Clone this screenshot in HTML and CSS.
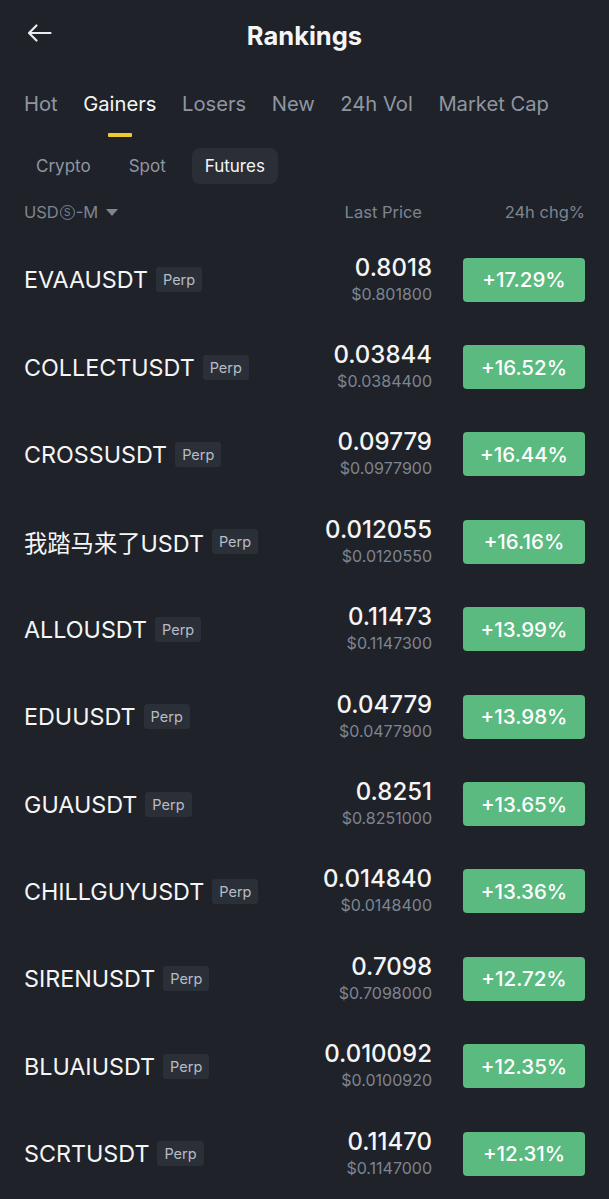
FILE: index.html
```html
<!DOCTYPE html>
<html lang="en">
<head>
    <meta charset="UTF-8">
    <meta name="viewport" content="width=device-width, initial-scale=1.0">
    <title>Rankings</title>
    <link rel="stylesheet" href="styles.css">
</head>
<body>
    <div id="pantalla">
        <div id="cabecera">
            <span class="atras">
                <svg width="26" height="20" viewBox="0 0 26 20"><path d="M24.5 10H3M10.5 2.5L3 10l7.5 7.5" fill="none" stroke="#eaecef" stroke-width="2.2" stroke-linecap="round" stroke-linejoin="round"/></svg>
            </span>
            <div class="titulo">Rankings</div>
        </div>

        <div id="pestanas">
            <div class="pestana">Hot</div>
            <div class="pestana activa">Gainers</div>
            <div class="pestana">Losers</div>
            <div class="pestana">New</div>
            <div class="pestana">24h Vol</div>
            <div class="pestana">Market Cap</div>
        </div>

        <div id="subpestanas">
            <div class="sub">Crypto</div>
            <div class="sub">Spot</div>
            <div class="sub sub-activa">Futures</div>
        </div>

        <div id="encabezado">
            <div class="col-nombre">USD<span class="circulo">S</span>-M <span class="flecha"></span></div>
            <div class="col-precio">Last Price</div>
            <div class="col-cambio">24h chg%</div>
        </div>

        <div id="lista"></div>
    </div>

    <script>
        const pares = [
            ["EVAAUSDT", "0.8018", "$0.801800", "+17.29%"],
            ["COLLECTUSDT", "0.03844", "$0.0384400", "+16.52%"],
            ["CROSSUSDT", "0.09779", "$0.0977900", "+16.44%"],
            ["我踏马来了USDT", "0.012055", "$0.0120550", "+16.16%"],
            ["ALLOUSDT", "0.11473", "$0.1147300", "+13.99%"],
            ["EDUUSDT", "0.04779", "$0.0477900", "+13.98%"],
            ["GUAUSDT", "0.8251", "$0.8251000", "+13.65%"],
            ["CHILLGUYUSDT", "0.014840", "$0.0148400", "+13.36%"],
            ["SIRENUSDT", "0.7098", "$0.7098000", "+12.72%"],
            ["BLUAIUSDT", "0.010092", "$0.0100920", "+12.35%"],
            ["SCRTUSDT", "0.11470", "$0.1147000", "+12.31%"]
        ];

        const lista = document.getElementById("lista");
        pares.forEach(p => {
            lista.innerHTML += `
                <div class="fila">
                    <div class="nombre">${p[0]}<span class="perp">Perp</span></div>
                    <div class="precio">
                        <div class="ultimo">${p[1]}</div>
                        <div class="dolar">${p[2]}</div>
                    </div>
                    <div class="cambio">${p[3]}</div>
                </div>`;
        });
    </script>
</body>
</html>
```

FILE: styles.css
```css
* {
    margin: 0;
    padding: 0;
    box-sizing: border-box;
}

html, body {
    width: 100%;
    height: 100%;
    background-color: #1f2229;
    font-family: Inter, "Noto Sans CJK SC", sans-serif;
    color: #eaecef;
    overflow: hidden;
}

#pantalla {
    width: 609px;
}

#cabecera {
    position: relative;
    height: 70px;
    display: flex;
    align-items: center;
    justify-content: center;
}

.atras {
    position: absolute;
    left: 26px;
    top: 23px;
}

.titulo {
    font-size: 25.5px;
    font-weight: 700;
    color: #f5f5f5;
}

#pestanas {
    display: flex;
    gap: 25.5px;
    padding: 21px 24px 0 24px;
    height: 68px;
}

.pestana {
    position: relative;
    font-size: 20.2px;
    color: #8f96a1;
    height: 32px;
}

.activa {
    color: #f5f5f5;
}

.activa::after {
    content: "";
    position: absolute;
    left: 50%;
    margin-left: -12px;
    bottom: -14px;
    width: 24px;
    height: 4px;
    border-radius: 1px;
    background-color: #f0c830;
}

#subpestanas {
    display: flex;
    gap: 4px;
    padding: 10px 0 0 24px;
}

.sub {
    font-size: 17px;
    color: #8f96a1;
    padding: 8px 12px;
    height: 36px;
    line-height: 20px;
    border-radius: 8px;
    margin-right: 10px;
}

.sub-activa {
    background-color: #2a2e37;
    color: #f5f5f5;
    padding: 8px 13px;
}

#encabezado {
    display: flex;
    align-items: center;
    padding: 14px 24px 0 24px;
    font-size: 16.5px;
    color: #7d8591;
    height: 42px;
}

.col-nombre {
    flex: 1;
    display: flex;
    align-items: center;
}

.circulo {
    display: inline-flex;
    align-items: center;
    justify-content: center;
    width: 15px;
    height: 15px;
    border: 1.3px solid #7d8591;
    border-radius: 50%;
    font-size: 10px;
    margin: 0 1px;
}

.flecha {
    width: 0;
    height: 0;
    margin-left: 8px;
    border-left: 6px solid transparent;
    border-right: 6px solid transparent;
    border-top: 7px solid #7d8591;
}

.col-precio {
    width: 160px;
    text-align: right;
}

.col-cambio {
    width: 163px;
    text-align: right;
}

#lista {
    padding-top: 10px;
}

.fila {
    display: flex;
    align-items: center;
    height: 87.4px;
    padding: 0 24px;
}

.nombre {
    flex: 1;
    display: flex;
    align-items: center;
    font-size: 23.3px;
    font-weight: 400;
    color: #f5f5f5;
    white-space: nowrap;
}

.perp {
    font-size: 14.5px;
    font-weight: 400;
    color: #b7bdc6;
    background-color: #2b2f37;
    border-radius: 3px;
    padding: 4px 7px;
    margin-left: 8px;
}

.precio {
    text-align: right;
}

.ultimo {
    font-size: 24px;
    font-weight: 500;
    color: #f5f5f5;
    line-height: 27px;
    margin-bottom: 1px;
}

.dolar {
    font-size: 16px;
    color: #7d8591;
    line-height: 24px;
}

.cambio {
    width: 122px;
    height: 44px;
    margin-left: 31px;
    border-radius: 4px;
    background-color: #5aba80;
    color: #ffffff;
    font-size: 20.5px;
    font-weight: 500;
    display: flex;
    align-items: center;
    justify-content: center;
}
```
